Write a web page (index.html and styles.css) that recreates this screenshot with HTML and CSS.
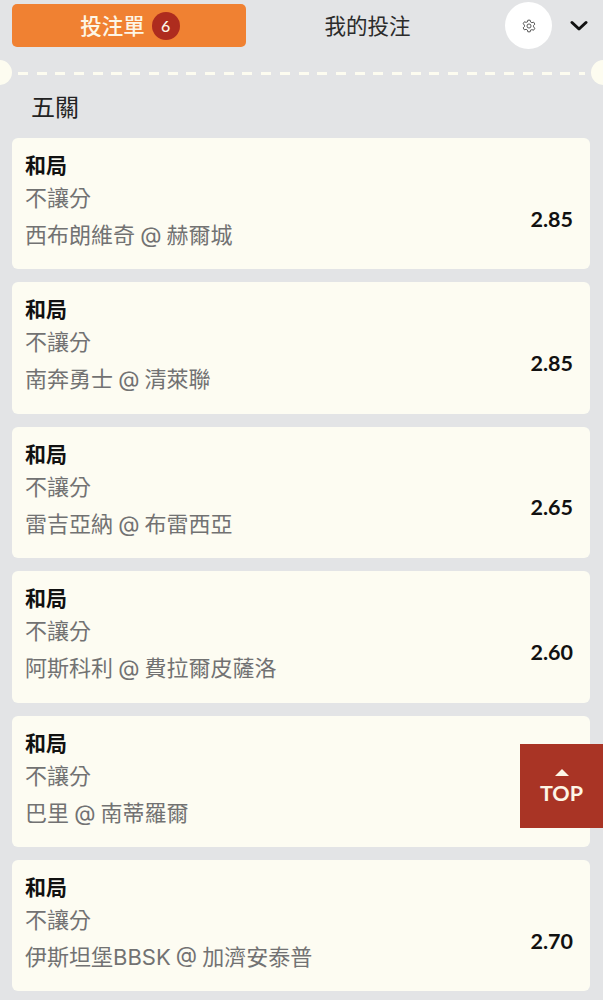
FILE: index.html
```html
<!DOCTYPE html>
<html lang="zh-Hant">
<head>
    <meta charset="UTF-8">
    <meta name="viewport" content="width=device-width, initial-scale=1.0">
    <title>投注單</title>
    <link rel="stylesheet" href="styles.css">
</head>
<body>
    <header class="tabs">
        <button class="tab tab-active">投注單 <span class="count">6</span></button>
        <button class="tab tab-plain">我的投注</button>
        <button class="settings" aria-label="settings">
            <svg width="14" height="14" viewBox="0 0 24 24" fill="none" stroke="#444" stroke-width="1.5" stroke-linejoin="round">
                <path d="M10 2h4l.7 3 2.3 1.3 3-.9 2 3.4-2.2 2.2v2.6l2.2 2.2-2 3.4-3-.9L14.700 19l-.7 3h-4l-.7-3L7 17.700l-3 .9-2-3.400 2.200-2.200v-2.600L2 8.200l2-3.400 3 .9L9.300 5z"/>
                <circle cx="12" cy="12" r="3.500"/>
            </svg>
        </button>
        <button class="collapse" aria-label="collapse">
            <svg width="18" height="12" viewBox="0 0 18 12" fill="none" stroke="#111" stroke-width="3" stroke-linecap="round" stroke-linejoin="round">
                <path d="M2 2.500l7 6.500 7-6.500"/>
            </svg>
        </button>
    </header>

    <div class="divider"></div>

    <h2 class="slip-type">五關</h2>

    <main class="bets">
        <div class="bet">
            <div class="bet-info">
                <div class="bet-pick">和局</div>
                <div class="bet-line">不讓分</div>
                <div class="bet-match">西布朗維奇 @ 赫爾城</div>
            </div>
            <div class="bet-odds">2.85</div>
        </div>
        <div class="bet">
            <div class="bet-info">
                <div class="bet-pick">和局</div>
                <div class="bet-line">不讓分</div>
                <div class="bet-match">南奔勇士 @ 清萊聯</div>
            </div>
            <div class="bet-odds">2.85</div>
        </div>
        <div class="bet">
            <div class="bet-info">
                <div class="bet-pick">和局</div>
                <div class="bet-line">不讓分</div>
                <div class="bet-match">雷吉亞納 @ 布雷西亞</div>
            </div>
            <div class="bet-odds">2.65</div>
        </div>
        <div class="bet">
            <div class="bet-info">
                <div class="bet-pick">和局</div>
                <div class="bet-line">不讓分</div>
                <div class="bet-match">阿斯科利 @ 費拉爾皮薩洛</div>
            </div>
            <div class="bet-odds">2.60</div>
        </div>
        <div class="bet">
            <div class="bet-info">
                <div class="bet-pick">和局</div>
                <div class="bet-line">不讓分</div>
                <div class="bet-match">巴里 @ 南蒂羅爾</div>
            </div>
            <div class="bet-odds"></div>
        </div>
        <div class="bet">
            <div class="bet-info">
                <div class="bet-pick">和局</div>
                <div class="bet-line">不讓分</div>
                <div class="bet-match">伊斯坦堡BBSK @ 加濟安泰普</div>
            </div>
            <div class="bet-odds">2.70</div>
        </div>
    </main>

    <button class="to-top">
        <span class="to-top-arrow"></span>
        TOP
    </button>
</body>
</html>
```

FILE: styles.css
```css
* {
    box-sizing: border-box;
}

html, body {
    height: 1000px;
    overflow: hidden;
}

body {
    margin: 0;
    background-color: #e3e4e6;
    color: #222;
    font-family: Lato, "Noto Sans CJK TC", sans-serif;
    position: relative;
}

button {
    border: none;
    background: none;
    padding: 0;
    font: inherit;
    cursor: pointer;
}

.tabs {
    display: flex;
    align-items: center;
    height: 50px;
    padding: 1px 0 0 12px;
}

.tab {
    height: 43px;
    padding-bottom: 3px;
    font-size: 21.500px;
    display: flex;
    align-items: center;
    justify-content: center;
}

.tab-active {
    width: 234px;
    gap: 7px;
    padding-left: 2px;
    background-color: #f08132;
    color: #fdf6e6;
    border-radius: 5px;
    font-weight: 500;
}

.tab-plain {
    width: 243px;
    color: #2b2b2b;
}

.count {
    width: 28px;
    height: 28px;
    margin-top: 3px;
    border-radius: 50%;
    background-color: #ae2c1e;
    color: #fdf6e6;
    font-size: 16px;
    display: flex;
    align-items: center;
    justify-content: center;
}

.settings {
    width: 47px;
    height: 47px;
    margin-left: 16px;
    border-radius: 50%;
    background-color: #fff;
    display: flex;
    align-items: center;
    justify-content: center;
}

.collapse {
    width: 18px;
    height: 12px;
    margin-left: 18px;
    display: flex;
}

.divider {
    position: relative;
    height: 3px;
    margin: 22px 0 0 18px;
    width: 567px;
    background-image: repeating-linear-gradient(to right, #fdfcf0 0 10px, transparent 10px 18.700px);
}

.divider::before,
.divider::after {
    content: "";
    position: absolute;
    top: -12px;
    width: 25px;
    height: 25px;
    border-radius: 50%;
    background-color: #fdfcf0;
}

.divider::before {
    left: -31px;
}

.divider::after {
    right: -31px;
}

.slip-type {
    margin: 0;
    padding: 16px 0 0 31px;
    height: 63px;
    font-size: 24px;
    line-height: 32px;
    font-weight: 400;
    color: #222;
}

.bets {
    display: flex;
    flex-direction: column;
    gap: 13px;
    padding: 0 13px 0 12px;
}

.bet {
    height: 131.400px;
    flex-shrink: 0;
    display: flex;
    align-items: center;
    justify-content: space-between;
    padding: 12px 17px 0 13px;
    background-color: #fdfcf2;
    border-radius: 6px;
}

.bet-info {
    align-self: flex-start;
}

.bet-pick {
    font-size: 21px;
    line-height: 29px;
    font-weight: 700;
    color: #111;
}

.bet-line {
    margin-top: 1px;
    font-size: 22px;
    line-height: 35px;
    color: #727272;
}

.bet-match {
    font-family: Inter, "Noto Sans CJK TC", sans-serif;
    font-size: 22px;
    line-height: 41px;
    word-spacing: -1px;
    color: #727272;
}

.bet-odds {
    margin-top: 18px;
    font-size: 21.500px;
    font-weight: 700;
    color: #111;
}

.to-top {
    position: absolute;
    left: 520px;
    top: 744px;
    width: 83px;
    height: 84px;
    background-color: #a93425;
    color: #fdf6e6;
    font-size: 21.500px;
    font-weight: 700;
    line-height: 28px;
    display: flex;
    flex-direction: column;
    align-items: center;
    padding-top: 25px;
    gap: 3px;
}

.to-top-arrow {
    width: 0;
    height: 0;
    border-left: 7px solid transparent;
    border-right: 7px solid transparent;
    border-bottom: 7px solid #fdf6e6;
}
```
